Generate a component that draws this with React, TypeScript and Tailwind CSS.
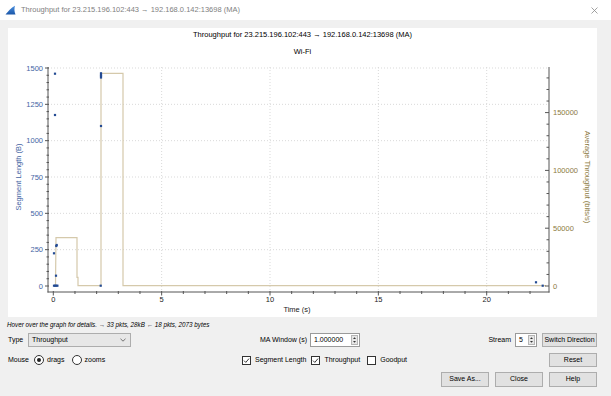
import React from "react";

const FONT = "Liberation Sans, Arial, sans-serif";
const BLUE = "#4465a3";
const OLIVE = "#8c7a3e";

const X = (t: number) => 53.3 + 21.67 * t;
const YL = (v: number) => 286 - v * 0.14533;
const YR = (v: number) => 286 - v * 0.001156;

const range = (a: number, b: number, s: number) => {
  const out: number[] = [];
  for (let v = a; v <= b + 1e-6; v += s) out.push(v);
  return out;
};

const dots: [number, number][] = [
  [55, 73.7], [55, 115], [54, 253.3], [56.3, 246], [56.7, 245], [56, 275.7],
  [54, 285.7], [55.2, 285.7], [56.3, 285.7], [57.4, 285.7],
  [101, 73.3], [101, 74.8], [101, 76.2], [101, 77.5], [101, 126], [100.7, 285.7],
  [536, 282.3], [542.7, 285.7],
];

const Plot = () => (
  <svg width={589} height={257} viewBox="8 60 589 257" style={{ fontFamily: FONT }}>
    {/* grid */}
    {range(250, 1500, 250).map((v) => (
      <line key={"gh" + v} x1={48} x2={549} y1={YL(v)} y2={YL(v)} stroke="#d9d9d9" strokeDasharray="1 2" />
    ))}
    {[5, 10, 15, 20].map((t) => (
      <line key={"gv" + t} x1={X(t)} x2={X(t)} y1={67} y2={292} stroke="#d9d9d9" strokeDasharray="1 2" />
    ))}
    {/* throughput */}
    <path
      d="M54 285.7 L55.5 285.7 L56 237.7 L77 237.7 L77 277.3 L78 277.3 L78 285.7 L101 285.7 L101 73.3 L123 73.3 L123 285.7 L546 285.7"
      fill="none"
      stroke="#d5c9ab"
      strokeWidth={1.2}
    />
    {dots.map(([x, y], i) => (
      <rect key={i} x={x - 1.1} y={y - 1.1} width={2.2} height={2.2} fill="#244b93" />
    ))}
    {/* axes */}
    <line x1={48} x2={48} y1={67} y2={292.5} stroke="#555" />
    <line x1={549} x2={549} y1={67} y2={292.5} stroke="#555" />
    <line x1={47.5} x2={549.5} y1={292} y2={292} stroke="#555" />
    {range(0, 1500, 50).map((v) => (
      <line key={"lt" + v} x1={v % 250 === 0 ? 45 : 46.5} x2={49} y1={YL(v)} y2={YL(v)} stroke="#555" />
    ))}
    {range(0, 180000, 10000).map((v) => (
      <line key={"rt" + v} x1={v % 50000 === 0 ? 545 : 546.5} x2={549} y1={YR(v)} y2={YR(v)} stroke="#555" />
    ))}
    {range(0, 22, 1).map((t) => (
      <line key={"bt" + t} x1={X(t)} x2={X(t)} y1={291} y2={t % 5 === 0 ? 295.5 : 294} stroke="#555" />
    ))}
    {/* labels */}
    {range(0, 1500, 250).map((v) => (
      <text key={"ll" + v} x={43} y={YL(v)} fontSize={7.5} fill={BLUE} textAnchor="end" dominantBaseline="central">
        {v}
      </text>
    ))}
    {range(0, 150000, 50000).map((v) => (
      <text key={"rl" + v} x={553} y={YR(v)} fontSize={7.5} fill={OLIVE} dominantBaseline="central">
        {v}
      </text>
    ))}
    {[0, 5, 10, 15, 20].map((t) => (
      <text key={"bl" + t} x={X(t)} y={299} fontSize={7.5} fill="#222" textAnchor="middle" dominantBaseline="central">
        {t}
      </text>
    ))}
    <text x={297} y={309} fontSize={7.5} fill="#222" textAnchor="middle" dominantBaseline="central">
      Time (s)
    </text>
    <text
      x={18}
      y={177}
      fontSize={7.5}
      fill={BLUE}
      textAnchor="middle"
      dominantBaseline="central"
      transform="rotate(-90 18 177)"
    >
      Segment Length (B)
    </text>
    <text
      x={587}
      y={177}
      fontSize={7.5}
      fill={OLIVE}
      textAnchor="middle"
      dominantBaseline="central"
      transform="rotate(90 587 177)"
    >
      Average Throughput (bits/s)
    </text>
  </svg>
);

const Btn = ({ children, className = "" }: { children: React.ReactNode; className?: string }) => (
  <div
    className={
      "flex h-[14px] items-center justify-center border border-[#adadad] bg-[#e1e1e1] text-[7px] text-black " +
      className
    }
  >
    {children}
  </div>
);

const Spin = ({ value, className = "" }: { value: string; className?: string }) => (
  <div className={"flex h-[14px] items-center border border-[#9a9a9a] bg-white pl-[3px] " + className}>
    <span className="flex-1 text-[7px]">{value}</span>
    <div className="mr-[1px] flex h-[10px] w-[7px] flex-col border border-[#b5b5b5] bg-[#e6e6e6]">
      <svg width="5" height="4" viewBox="0 0 5 4">
        <path d="M1 3 L2.5 1.2 L4 3 Z" fill="#333" />
      </svg>
      <svg width="5" height="4" viewBox="0 0 5 4">
        <path d="M1 1 L2.5 2.8 L4 1 Z" fill="#333" />
      </svg>
    </div>
  </div>
);

const Check = ({ label, checked }: { label: string; checked: boolean }) => (
  <div className="flex items-center">
    <div className="flex h-[9px] w-[9px] items-center justify-center border border-[#333] bg-white">
      {checked && (
        <svg width="7" height="7" viewBox="0 0 7 7">
          <path d="M1 3.6 L2.8 5.4 L6 1.6" fill="none" stroke="#222" strokeWidth={0.9} />
        </svg>
      )}
    </div>
    <span className="ml-[4px] text-[7px]">{label}</span>
  </div>
);

const Radio = ({ label, checked }: { label: string; checked: boolean }) => (
  <div className="flex items-center">
    <div className="flex h-[10px] w-[10px] items-center justify-center rounded-full border border-[#333] bg-white">
      {checked && <div className="h-[4px] w-[4px] rounded-full bg-[#222]" />}
    </div>
    <span className="ml-[3px] text-[7px]">{label}</span>
  </div>
);

export default function App() {
  return (
    <div className="flex h-[396px] w-[611px] flex-col overflow-hidden bg-[#f0f0f0] font-['Liberation_Sans',Arial,sans-serif] text-black">
      {/* title bar */}
      <div className="flex h-[20px] items-center bg-white">
        <svg className="ml-[5px]" width="11" height="10" viewBox="0 0 11 10">
          <defs>
            <linearGradient id="fin" x1="0" y1="0" x2="0" y2="1">
              <stop offset="0" stopColor="#4a90e0" />
              <stop offset="1" stopColor="#1a56a8" />
            </linearGradient>
          </defs>
          <path d="M0.5 9.5 C3 6.5 6 3 10 0.8 C9.2 3.5 9.2 6.5 10.5 9.5 Z" fill="url(#fin)" />
        </svg>
        <span className="ml-[5px] text-[7.5px] text-[#808080]">
          Throughput for 23.215.196.102:443 → 192.168.0.142:13698 (MA)
        </span>
        <svg className="ml-auto mr-[13px]" width="7" height="7" viewBox="0 0 7 7">
          <path d="M0.5 0.5 L6.5 6.5 M6.5 0.5 L0.5 6.5" stroke="#8a8a8a" strokeWidth={0.8} />
        </svg>
      </div>

      {/* plot panel */}
      <div className="ml-[8px] mr-[14px] mt-[8px] flex h-[289px] flex-col items-center bg-white pt-[2px]">
        <div className="text-[7.5px] leading-[10px]">Throughput for 23.215.196.102:443 → 192.168.0.142:13698 (MA)</div>
        <div className="mt-[7px] text-[7.5px] leading-[10px]">Wi-Fi</div>
        <div className="mt-[3px] self-start">
          <Plot />
        </div>
      </div>

      {/* hint */}
      <div className="mt-[2px] pl-[7px] text-[6.3px] italic leading-[11px]">
        Hover over the graph for details. → 33 pkts, 28kB ← 18 pkts, 2073 bytes
      </div>

      {/* row 1 */}
      <div className="mt-[3px] flex h-[14px] items-center pl-[8px] pr-[14px] text-[7px]">
        <span className="w-[20px]">Type</span>
        <div className="flex h-[14px] w-[103px] items-center border border-[#adadad] bg-[#e7e7e7] pl-[3px] pr-[4px]">
          <span className="flex-1">Throughput</span>
          <svg width="6" height="4" viewBox="0 0 6 4">
            <path d="M0.5 0.8 L3 3.2 L5.5 0.8" fill="none" stroke="#555" strokeWidth={0.8} />
          </svg>
        </div>
        <span className="w-[176px] text-right">MA Window (s)</span>
        <Spin value="1.000000" className="ml-[3px] w-[50px]" />
        <span className="ml-auto mr-[4px]">Stream</span>
        <Spin value="5" className="w-[22px]" />
        <Btn className="ml-[5px] w-[55px]">Switch Direction</Btn>
      </div>

      {/* row 2 */}
      <div className="mt-[6px] flex h-[14px] items-center pl-[8px] pr-[14px] text-[7px]">
        <div className="flex w-[234px] items-center">
          <span className="w-[26px]">Mouse</span>
          <Radio label="drags" checked />
          <div className="ml-[7px]">
            <Radio label="zooms" checked={false} />
          </div>
        </div>
        <Check label="Segment Length" checked />
        <div className="ml-[5px]">
          <Check label="Throughput" checked />
        </div>
        <div className="ml-[7px]">
          <Check label="Goodput" checked={false} />
        </div>
        <Btn className="ml-auto w-[48px]">Reset</Btn>
      </div>

      {/* row 3 */}
      <div className="mt-[5px] flex items-center justify-end gap-[6px] pr-[14px]">
        <Btn className="h-[15px] w-[48px]">Save As...</Btn>
        <Btn className="h-[15px] w-[48px]">Close</Btn>
        <Btn className="h-[15px] w-[48px]">Help</Btn>
      </div>
    </div>
  );
}
